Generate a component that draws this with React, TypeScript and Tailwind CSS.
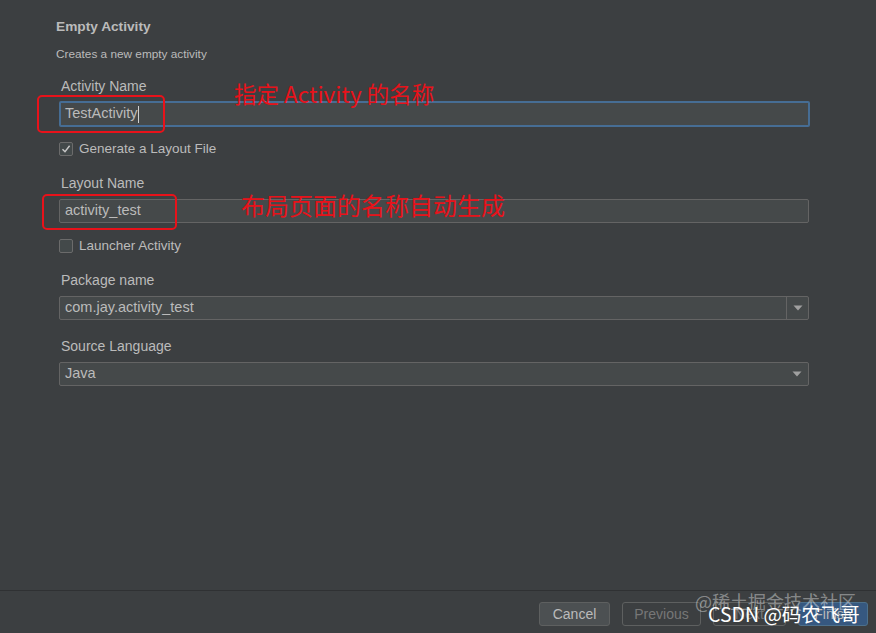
import React from 'react';

const font = { fontFamily: '"Liberation Sans", "Noto Sans CJK SC", sans-serif' };
const cjk = { fontFamily: '"Noto Sans CJK SC", "Liberation Sans", sans-serif' };

const Checkbox: React.FC<{ checked?: boolean; label: string; className?: string }> = ({ checked, label, className }) => (
  <div className={`flex items-center h-[16px] ${className ?? ''}`}>
    <div className="w-[14px] h-[14px] rounded-[2px] border border-[#6b6b6b] bg-[#43494a] flex items-center justify-center">
      {checked && (
        <svg width="10" height="10" viewBox="0 0 10 10">
          <path d="M1.5 5.2 L4 7.8 L8.6 1.8" stroke="#c8c8c8" strokeWidth="1.4" fill="none" />
        </svg>
      )}
    </div>
    <span className="ml-[6px] text-[13.5px] text-[#bbbbbb]">{label}</span>
  </div>
);

const Dropdown: React.FC<{ value: string; split?: boolean }> = ({ value, split }) => (
  <div className="mt-[8px] w-[750px] h-[24px] flex items-center border border-[#646464] rounded-[2px] bg-[#45494a]">
    <span className="flex-1 pl-[5px] text-[14.5px] text-[#bbbbbb]">{value}</span>
    <div className={`w-[22px] h-full flex items-center justify-center ${split ? 'border-l border-[#646464]' : ''}`}>
      <svg width="10" height="6" viewBox="0 0 10 6">
        <path d="M0.5 0.5 L9.5 0.5 L5 5.5 Z" fill="#a0a0a0" />
      </svg>
    </div>
  </div>
);

const Label: React.FC<{ text: string; className?: string }> = ({ text, className }) => (
  <div className={`pl-[2px] text-[14px] leading-[16px] text-[#bbbbbb] ${className ?? ''}`}>{text}</div>
);

export default function App() {
  return (
    <div className="w-[876px] h-[633px] bg-[#3c3f41] flex flex-col relative overflow-hidden" style={font}>
      <div className="flex-1 pl-[56px] pt-[19px]">
        <div className="text-[13.7px] leading-[16px] font-bold text-[#bbbbbb]">Empty Activity</div>
        <div className="mt-[12px] text-[11.8px] leading-[14px] text-[#bbbbbb]">Creates a new empty activity</div>

        <div className="pl-[3px]">
          <Label text="Activity Name" className="mt-[17px]" />
          <div className="mt-[7px] w-[751px] h-[26px] flex items-center border-2 border-[#466d94] rounded-[2px] bg-[#45494a]">
            <span className="pl-[4px] text-[14.5px] text-[#bbbbbb]">TestActivity</span>
            <span className="w-px h-[17px] bg-[#d0d0d0]" />
          </div>

          <Checkbox checked label="Generate a Layout File" className="mt-[14px]" />

          <Label text="Layout Name" className="mt-[18px]" />
          <div className="mt-[8px] w-[750px] h-[24px] flex items-center border border-[#646464] rounded-[2px] bg-[#45494a]">
            <span className="pl-[5px] text-[14.5px] text-[#bbbbbb]">activity_test</span>
          </div>

          <Checkbox label="Launcher Activity" className="mt-[15px]" />

          <Label text="Package name" className="mt-[18px]" />
          <Dropdown value="com.jay.activity_test" split />

          <Label text="Source Language" className="mt-[18px]" />
          <Dropdown value="Java" />
        </div>
      </div>

      <div className="h-[43px] border-t border-[#2f3133] flex items-center justify-end gap-[12px] pr-[8px] pt-[4px]">
        <button className="w-[71px] h-[24px] rounded-[3px] border border-[#5e6060] bg-[#4c5052] text-[14px] text-[#bbbbbb]">Cancel</button>
        <button className="w-[79px] h-[24px] rounded-[3px] border border-[#5e6060] text-[14px] text-[#777777]">Previous</button>
        <button className="w-[73px] h-[24px] rounded-[3px] border border-[#5e6060] text-[14px] text-[#777777]">Next</button>
        <button className="w-[70px] h-[24px] rounded-[3px] border border-[#4c708c] bg-[#365880] text-[14px] text-[#bbbbbb]">Finish</button>
      </div>

      {/* red annotations */}
      <div className="absolute left-[37px] top-[95px] w-[128px] h-[38px] border-2 border-[#e8121a] rounded-[5px]" />
      <div className="absolute left-[234px] top-[78px] text-[22.5px] leading-[30px] text-[#e8121a] whitespace-nowrap" style={cjk}>
        指定 Activity 的名称
      </div>
      <div className="absolute left-[42px] top-[194px] w-[135px] h-[36px] border-2 border-[#e8121a] rounded-[5px]" />
      <div className="absolute left-[241px] top-[190px] text-[24px] leading-[30px] text-[#e8121a] whitespace-nowrap" style={cjk}>
        布局页面的名称自动生成
      </div>

      {/* watermark */}
      <div className="absolute left-[695px] top-[590px] text-[18px] leading-[22px] text-white/40 whitespace-nowrap" style={cjk}>
        @稀土掘金技术社区
      </div>
      <div className="absolute left-[708px] top-[602px] text-[19.5px] leading-[24px] text-white whitespace-nowrap" style={cjk}>
        CSDN @码农飞哥
      </div>
    </div>
  );
}
